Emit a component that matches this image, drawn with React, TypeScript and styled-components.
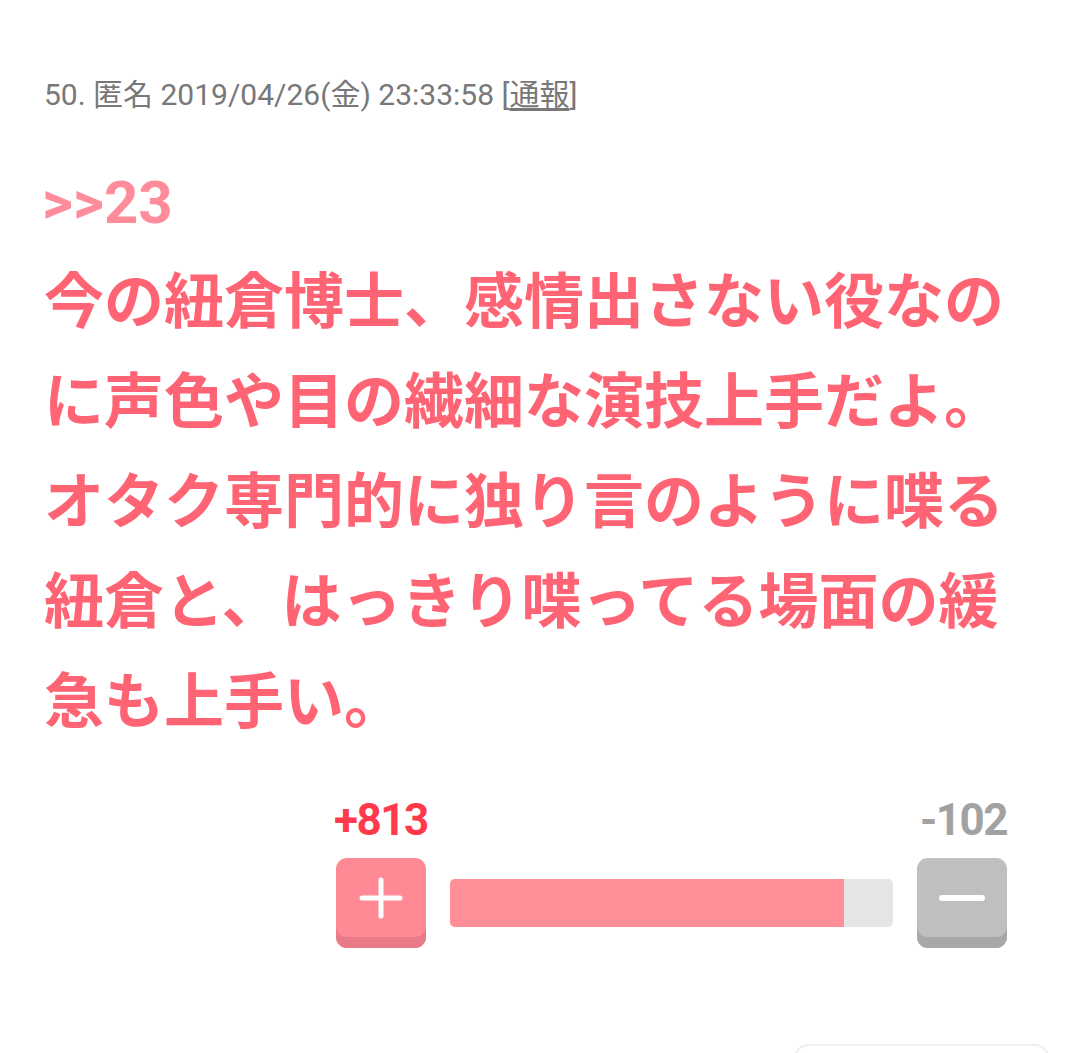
import React from "react"
import styled, { createGlobalStyle } from "styled-components"

const GlobalStyle = createGlobalStyle`
  html, body {
    margin: 0;
    padding: 0;
    background: #fff;
  }
  body {
    font-family: Roboto, "Noto Sans CJK JP", sans-serif;
  }
`

const Page = styled.div`
  display: flex;
  flex-direction: column;
  padding: 75px 0 0 44px;
  height: 1053px;
  box-sizing: border-box;
  overflow: hidden;
`

const Meta = styled.div`
  font-size: 30px;
  line-height: 40px;
  color: #787878;
  white-space: nowrap;
`

const Report = styled.a`
  color: #787878;
  text-decoration: underline;
  text-underline-offset: 3px;
`

const Body = styled.div`
  margin-top: 38px;
  width: 990px;
  font-size: 60px;
  line-height: 100px;
  font-weight: 700;
  color: #ff6474;
`

const Anchor = styled.span`
  color: #ff8c9a;
  margin-left: -2px;
`

const Vote = styled.div`
  display: flex;
  flex-direction: column;
  width: 673px;
  margin: 44px 0 0 290px;
`

const Counts = styled.div`
  display: flex;
  justify-content: space-between;
  font-size: 44px;
  line-height: 47px;
  font-weight: 700;
  letter-spacing: -1.5px;
`

const Count = styled.span<{ $color: string }>`
  color: ${(p) => p.$color};
`

const Controls = styled.div`
  display: flex;
  align-items: center;
  gap: 24px;
  margin: 14px 0 0 2px;
`

const VoteButton = styled.button<{ $face: string; $lip: string }>`
  width: 90px;
  height: 90px;
  flex: none;
  border: none;
  border-radius: 11px;
  padding: 0 0 11px;
  background: ${(p) => p.$face};
  box-shadow: inset 0 -11px 0 ${(p) => p.$lip};
  display: flex;
  align-items: center;
  justify-content: center;
`

const Bar = styled.div`
  flex: 1;
  height: 48px;
  border-radius: 5px;
  background: #e5e5e5;
  overflow: hidden;
  display: flex;
`

const Fill = styled.div`
  height: 100%;
  background: #ff8e99;
`

const Footer = styled.div`
  align-self: flex-end;
  width: 251px;
  height: 40px;
  margin: 96px 31px 0 0;
  border: 2px solid #efefef;
  border-radius: 14px;
  flex: none;
`

const PlusIcon = () => (
  <svg width="44" height="44" viewBox="0 0 44 44">
    <path d="M22 4 V40 M3 22 H41" stroke="#fff" strokeWidth="5" strokeLinecap="round" />
  </svg>
)

const MinusIcon = () => (
  <svg width="46" height="10" viewBox="0 0 46 10">
    <path d="M3 5 H43" stroke="#fff" strokeWidth="6" strokeLinecap="round" />
  </svg>
)

const App = () => {
  const plus = 813
  const minus = 102
  const ratio = (plus / (plus + minus)) * 100

  return (
    <>
      <GlobalStyle />
      <Page>
        <Meta>
          50. 匿名 2019/04/26(金) 23:33:58 [<Report>通報</Report>]
        </Meta>
        <Body>
          <Anchor>&gt;&gt;23</Anchor>
          <br />
          今の紐倉博士、感情出さない役なのに声色や目の繊細な演技上手だよ。
          <br />
          オタク専門的に独り言のように喋る紐倉と、はっきり喋ってる場面の緩急も上手い。
        </Body>
        <Vote>
          <Counts>
            <Count $color="#ff3a4c">+{plus}</Count>
            <Count $color="#a2a2a2">-{minus}</Count>
          </Counts>
          <Controls>
            <VoteButton $face="#ff8a96" $lip="#e87b87">
              <PlusIcon />
            </VoteButton>
            <Bar>
              <Fill style={{ width: `${ratio}%` }} />
            </Bar>
            <VoteButton $face="#bfbfbf" $lip="#a8a8a8">
              <MinusIcon />
            </VoteButton>
          </Controls>
        </Vote>
        <Footer />
      </Page>
    </>
  )
}

export default App
